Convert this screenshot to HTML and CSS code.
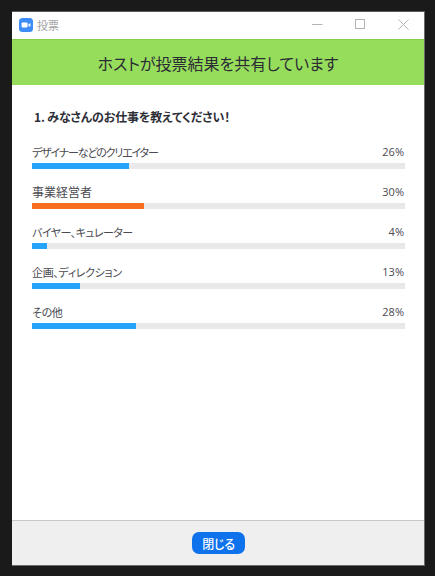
FILE: index.html
```
<!DOCTYPE html>
<html lang="ja">
<head>
<meta charset="utf-8">
<title>投票</title>
<link rel="stylesheet" href="styles.css">
</head>
<body>
<div class="window">
  <header class="titlebar">
    <svg class="logo" viewBox="0 0 14 14" width="14" height="14"><rect width="14" height="14" rx="3.5" fill="#3d8cf7"/><rect x="2.6" y="4.4" width="6" height="5.2" rx="1.1" fill="#fff"/><path d="M9.3 6.4 11.4 4.9V9.1L9.3 7.6Z" fill="#fff"/></svg>
    <span class="title">投票</span>
    <div class="controls">
      <svg viewBox="0 0 11 11" width="11" height="11"><path d="M0 5.5H10.5" stroke="#b4b4b4" stroke-width="1" fill="none"/></svg>
      <svg viewBox="0 0 11 11" width="11" height="11"><rect x=".5" y=".5" width="9" height="9" stroke="#b4b4b4" stroke-width="1" fill="none"/></svg>
      <svg viewBox="0 0 11 11" width="11" height="11"><path d="M.5.5 10.5 10.5M10.5.5.5 10.5" stroke="#b4b4b4" stroke-width="1" fill="none"/></svg>
    </div>
  </header>
  <div class="banner">ホストが投票結果を共有しています</div>
  <main class="content">
    <h1 class="question">1. みなさんのお仕事を教えてください！</h1>
    <div class="option">
      <div class="row"><span class="label kana-tight">デザイナーなどのクリエイター</span><span class="pct">26%</span></div>
      <div class="track"><div class="fill" style="width:26%"></div></div>
    </div>
    <div class="option">
      <div class="row"><span class="label">事業経営者</span><span class="pct">30%</span></div>
      <div class="track"><div class="fill top" style="width:30%"></div></div>
    </div>
    <div class="option">
      <div class="row"><span class="label kana-mid">バイヤー、キュレーター</span><span class="pct">4%</span></div>
      <div class="track"><div class="fill" style="width:4%"></div></div>
    </div>
    <div class="option">
      <div class="row"><span class="label kana-loose">企画、ディレクション</span><span class="pct">13%</span></div>
      <div class="track"><div class="fill" style="width:13%"></div></div>
    </div>
    <div class="option">
      <div class="row"><span class="label kana-loose">その他</span><span class="pct">28%</span></div>
      <div class="track"><div class="fill" style="width:28%"></div></div>
    </div>
  </main>
  <footer class="footer"><button class="close">閉じる</button></footer>
</div>
</body>
</html>
```
FILE: styles.css
```
* { box-sizing: border-box; }
html, body { margin: 0; height: 100%; }
body {
  background: #1a1a1a;
  padding: 11px 10px 10px 12px;
  font-family: "Noto Sans CJK JP", "Noto Sans", sans-serif;
  font-feature-settings: "palt";
  overflow: hidden;
}
.window {
  width: 413px;
  height: 555px;
  background: #fff;
  border-top: 1px solid #5a5a5a;
  border-right: 1px solid #6a6a6a;
  border-bottom: 1px solid #6a6a6a;
  display: flex;
  flex-direction: column;
}
.titlebar {
  height: 27px;
  display: flex;
  align-items: center;
  padding: 0 15px 2px 7px;
  flex: none;
}
.logo { flex: none; }
.title { margin-left: 4px; font-size: 11px; color: #a3a3a3; }
.controls { margin-left: auto; display: flex; gap: 32px; }
.banner {
  height: 46px;
  flex: none;
  background: #97dd5c;
  border-top: 1px solid #84cf4b;
  display: flex;
  align-items: center;
  justify-content: center;
  font-size: 16px;
  color: #2c2c34;
}
.content { flex: 1; padding: 23px 19px 0 20px; }
.question {
  margin: 0 0 18px 2px;
  font-size: 12px;
  letter-spacing: -0.15px;
  line-height: 18px;
  font-weight: 700;
  color: #2e2e36;
}
.option { margin-bottom: 15px; }
.row {
  display: flex;
  justify-content: space-between;
  font-size: 12px;
  line-height: 16px;
  color: #4a4a50;
  margin-bottom: 3px;
}
.kana-tight { font-size: 11px; letter-spacing: -1.2px; }
.kana-mid { font-size: 11px; letter-spacing: -0.55px; }
.kana-loose { font-size: 11px; letter-spacing: -0.35px; }
.pct { font-size: 11px; font-family: "Open Sans", sans-serif; padding-right: 1px; }
.track { height: 6px; background: #e9e9e9; }
.fill { height: 100%; background: #25a3fb; }
.fill.top { background: #f86e1e; }
.footer {
  height: 45px;
  flex: none;
  background: #efefef;
  border-top: 1px solid #c8c8c8;
  padding-left: 1px;
  display: flex;
  align-items: center;
  justify-content: center;
}
.close {
  width: 53px;
  height: 22px;
  padding: 0;
  border: 0;
  border-radius: 7px;
  background: #0e72ed;
  color: #fff;
  font: 500 12px "Noto Sans CJK JP", sans-serif;
  font-feature-settings: "palt";
  letter-spacing: -0.3px;
}
```
